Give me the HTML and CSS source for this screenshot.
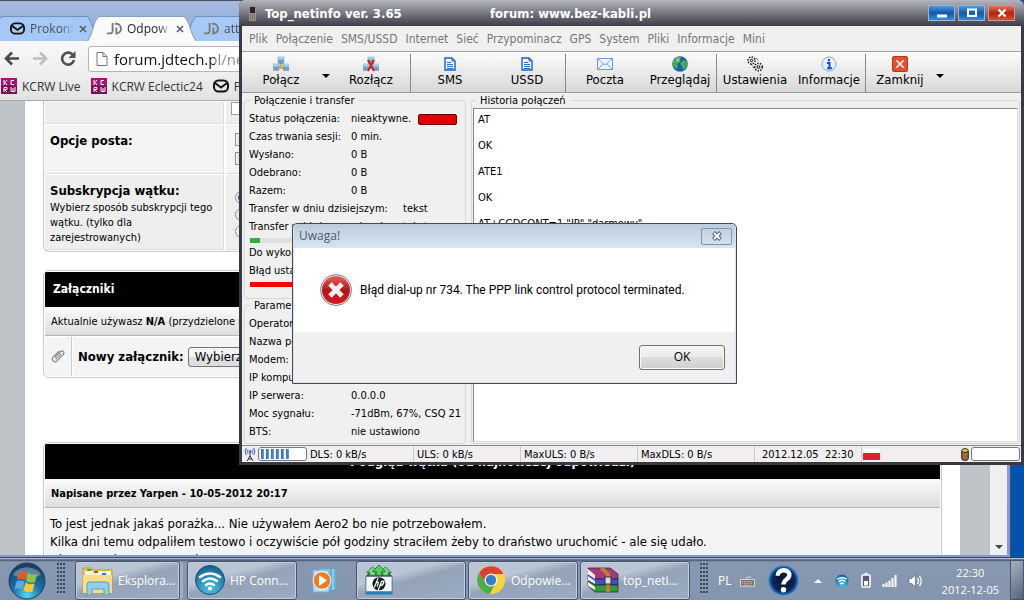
FILE: index.html
```html
<!DOCTYPE html>
<html lang="pl">
<head>
<meta charset="utf-8">
<title>Top_netinfo ver. 3.65</title>
<link rel="stylesheet" href="styles.css">
</head>
<body>
<svg class="defs" aria-hidden="true">
  <defs>
    <linearGradient id="gBlue" x1="0" y1="0" x2="0" y2="1"><stop offset="0" stop-color="#cfe8fa"/><stop offset="1" stop-color="#3f8fd0"/></linearGradient>
    <linearGradient id="gRed" x1="0" y1="0" x2="0" y2="1"><stop offset="0" stop-color="#e0635a"/><stop offset=".5" stop-color="#b3161b"/><stop offset="1" stop-color="#d6191e"/></linearGradient>
    <radialGradient id="gOrb" cx=".5" cy=".9" r=".9"><stop offset="0" stop-color="#4fd8f4"/><stop offset=".45" stop-color="#1d6fa8"/><stop offset="1" stop-color="#16365a"/></radialGradient>
    <radialGradient id="gWifi" cx=".5" cy=".8" r=".8"><stop offset="0" stop-color="#4cc4ea"/><stop offset="1" stop-color="#155f8c"/></radialGradient>
    <radialGradient id="gHelp" cx=".5" cy=".5" r=".5"><stop offset="0" stop-color="#0a1330"/><stop offset=".75" stop-color="#0c2558"/><stop offset="1" stop-color="#2e86d8"/></radialGradient>
    <g id="net">
      <path d="M8 7v4M3 12h10" stroke="#7b6b2a" fill="none"/>
      <rect x="5" y="1" width="6" height="5" fill="url(#gBlue)" stroke="#7fa8cc" stroke-width=".6"/><path d="M5 7h6" stroke="#567"/>
      <rect x="0" y="8" width="6" height="5" fill="url(#gBlue)" stroke="#7fa8cc" stroke-width=".6"/><path d="M0 14h6" stroke="#567"/>
      <rect x="10" y="8" width="6" height="5" fill="url(#gBlue)" stroke="#7fa8cc" stroke-width=".6"/><path d="M10 14h6" stroke="#567"/>
      <path d="M6 10h4M8 8v5" stroke="#e8b51e" stroke-width="1.500"/>
    </g>
    <g id="doc">
      <path d="M3 2h7l3 3v9H3z" fill="#eef5ff" stroke="#1d5fc4" stroke-width="1.400"/><path d="M10 2v3h3" fill="none" stroke="#1d5fc4"/><path d="M5 6.500h4M5 8.500h6M5 10.500h6M5 12.500h6" stroke="#2a6cc8"/>
    </g>
    <g id="mailr"><rect x="1" y="2.500" width="14" height="11" rx="4.500" fill="none" stroke="#111" stroke-width="2"/><path d="M2 5l6 4.500L14 5" fill="none" stroke="#111" stroke-width="2"/></g>
    <g id="jd" fill="none" stroke="#777b80" stroke-width="2"><path d="M6 1v8c0 3-2 3.500-6 3.200"/><path d="M8.500 2c8-1 8.500 10 1.500 10.500V6"/></g>
    <g id="kcrw"><rect width="16" height="16" fill="#a8107c"/><rect y="8" width="16" height="8" fill="#7c0c54"/><path d="M3 2v5M6 2L4 4.500 6 7M13 2.500h-3v4h3M3 14V9.500h3v2H3.500L6 14M10 9v4.500h4V9M12 10v3" fill="none" stroke="#fff"/></g>
    <g id="x"><path d="M1 1l6 6M7 1L1 7" stroke="#555d66" stroke-width="1.600"/></g>
  </defs>
</svg>

<main class="desktop">
  <section class="browser" aria-label="Przeglądarka">
    <div class="tabs">
      <div class="tab">
        <svg class="shape" viewBox="0 0 107 26" preserveAspectRatio="none"><path d="M0 26C5 24 6 2 12 .5H94C100 2 101 24 107 26"/></svg>
        <svg class="fav" viewBox="0 0 16 16"><use href="#mailr"/></svg><span class="name">Prokonf</span><button class="tx" aria-label="Zamknij kartę"><svg viewBox="0 0 8 8"><use href="#x"/></svg></button>
      </div>
      <div class="tab active">
        <svg class="shape" viewBox="0 0 107 26" preserveAspectRatio="none"><path d="M0 26C5 24 6 2 12 .5H94C100 2 101 24 107 26"/></svg>
        <svg class="fav" viewBox="0 0 16 14"><use href="#jd"/></svg><span class="name">Odpow</span><button class="tx" aria-label="Zamknij kartę"><svg viewBox="0 0 8 8"><use href="#x"/></svg></button>
      </div>
      <div class="tab">
        <svg class="shape" viewBox="0 0 107 26" preserveAspectRatio="none"><path d="M0 26C5 24 6 2 12 .5H94C100 2 101 24 107 26"/></svg>
        <svg class="fav" viewBox="0 0 16 14"><use href="#jd"/></svg><span class="name">attach</span>
      </div>
    </div>
    <div class="navbar">
      <button class="nav" aria-label="Wstecz"><svg viewBox="0 0 16 14"><path d="M8 1L2 7l6 6M2 7h13" fill="none" stroke="#4a4a4a" stroke-width="2.600"/></svg></button>
      <button class="nav" aria-label="Dalej"><svg viewBox="0 0 16 14"><path d="M8 1l6 6-6 6M14 7H1" fill="none" stroke="#bdbdbd" stroke-width="2.600"/></svg></button>
      <button class="nav" aria-label="Odśwież"><svg viewBox="0 0 16 15"><path d="M12.500 3.500A6 6 0 1 0 14 9" fill="none" stroke="#505050" stroke-width="2.600"/><path d="M15.500 0v7H8.500z" fill="#505050"/></svg></button>
      <div class="omni"><svg viewBox="0 0 12 15"><path d="M1 1h6l4 4v9H1zM7 1v4h4" fill="#fff" stroke="#777"/></svg><input aria-label="Adres" value="forum.jdtech.pl/newreply.php"></div>
    </div>
    <nav class="bookmarks">
      <a href="#"><svg viewBox="0 0 16 16"><use href="#kcrw"/></svg>KCRW Live</a>
      <a href="#"><svg viewBox="0 0 16 16"><use href="#kcrw"/></svg>KCRW Eclectic24</a>
      <a href="#"><svg viewBox="0 0 16 16"><use href="#mailr"/></svg>Prokonf</a>
    </nav>
    <div class="viewport">
      <div class="page">
        <div class="card options">
          <div class="orow first"><div class="ocell"></div><div class="oval"><textarea aria-label="Treść" rows="1"></textarea></div></div>
          <div class="orow second"><div class="ocell"><b>Opcje posta:</b></div><div class="oval"><input type="checkbox" aria-label="Opcja 1"><input type="checkbox" aria-label="Opcja 2"></div></div>
          <div class="orow third"><div class="ocell"><b>Subskrypcja wątku:</b><small>Wybierz sposób subskrypcji tego wątku. (tylko dla zarejestrowanych)</small></div><div class="oval"><input type="radio" name="s" checked aria-label="Tryb 1"><input type="radio" name="s" aria-label="Tryb 2"><input type="radio" name="s" aria-label="Tryb 3"></div></div>
        </div>
        <div class="card attach">
          <h2>Załączniki</h2>
          <div class="sub light">Aktualnie używasz&nbsp;<b>N/A</b>&nbsp;(przydzielone miejsce)</div>
          <div class="arow"><div class="clip"><svg viewBox="0 0 16 16"><path d="M4 9l6-6c2-2 5 0 3 3l-7 7c-2 2-6-1-4-4l7-7M5 11l6-6" fill="none" stroke="#888" stroke-width="1.300"/></svg></div><div class="anew"><b>Nowy załącznik:</b><button>Wybierz plik</button></div></div>
        </div>
        <div class="card preview">
          <h2>Podgląd wątku (od najnowszej odpowiedzi)</h2>
          <div class="sub"><b>Napisane przez Yarpen - 10-05-2012 20:17</b></div>
          <p>To jest jednak jakaś porażka... Nie używałem Aero2 bo nie potrzebowałem.<br>Kilka dni temu odpaliłem testowo i oczywiście pół godziny straciłem żeby to draństwo uruchomić - ale się udało.<br>Niestety od tego czasu nie</p>
        </div>
      </div>
      <div class="scroll"><svg viewBox="0 0 8 4"><path d="M0 0h8L4 4z" fill="#444"/></svg></div>
    </div>
  </section>

  <section class="app" aria-label="Top_netinfo">
    <header class="title">
      <svg class="phone" viewBox="0 0 10 16"><rect x="1" y="1" width="7" height="15" rx="1" fill="#9a9088"/><rect x="2" y="2" width="5" height="6" fill="#2b2024"/><path d="M2 10h5M2 12h5M2 14h5" stroke="#5a5551" stroke-dasharray="1 1"/></svg>
      <span class="appname">Top_netinfo ver. 3.65</span><span class="forum">forum: www.bez-kabli.pl</span>
      <div class="winbtns">
        <button aria-label="Minimalizuj"><svg viewBox="0 0 12 10"><path d="M1 8h10" stroke="#fff" stroke-width="3"/></svg></button>
        <button aria-label="Maksymalizuj"><svg viewBox="0 0 12 10"><rect x="2" y="1.500" width="8" height="6.500" fill="none" stroke="#fff" stroke-width="2"/></svg></button>
        <button class="close" aria-label="Zamknij"><svg viewBox="0 0 12 10"><path d="M2.500 1.500l7 7M9.500 1.500l-7 7" stroke="#fff" stroke-width="2.200"/></svg></button>
      </div>
    </header>
    <nav class="menu"><a href="#">Plik</a><a href="#">Połączenie</a><a href="#">SMS/USSD</a><a href="#">Internet</a><a href="#">Sieć</a><a href="#">Przypominacz</a><a href="#">GPS</a><a href="#">System</a><a href="#">Pliki</a><a href="#">Informacje</a><a href="#">Mini</a></nav>
    <div class="toolbar">
      <button class="tool wide"><svg viewBox="0 0 16 16"><use href="#net"/></svg>Połącz</button>
      <button class="drop" aria-label="Więcej"><svg viewBox="0 0 8 4"><path d="M0 0h8L4 4z"/></svg></button>
      <button class="tool wide"><svg viewBox="0 0 16 16"><use href="#net"/><path d="M5 4l6 11M11 4L5 15" stroke="#d81c1c" stroke-width="2"/></svg>Rozłącz</button>
      <i></i>
      <button class="tool wide"><svg viewBox="0 0 16 16"><use href="#doc"/></svg>SMS</button>
      <button class="tool"><svg viewBox="0 0 16 16"><use href="#doc"/></svg>USSD</button>
      <i></i>
      <button class="tool wide"><svg viewBox="0 0 16 16"><rect x=".5" y="2.500" width="15" height="11" fill="#eef6ff" stroke="#7398cc"/><path d="M1 3l7 6 7-6M1 13l5-5M15 13l-5-5" fill="none" stroke="#7fa5d8"/></svg>Poczta</button>
      <button class="tool slim"><svg viewBox="0 0 16 16"><circle cx="8" cy="8" r="7.800" fill="#1b62b8"/><path d="M4 2c3-2 5-1 5 0l-2 2 1 2-3 2 1 2-2 3C1 11 0 7 1 5zM10 5l3-1 2 3-1 5-3 2-1-4-2-2z" fill="#46b04a"/><circle cx="6" cy="4" r="2" fill="#fff" opacity=".35"/></svg>Przeglądaj</button>
      <i></i>
      <button class="tool"><svg viewBox="0 0 16 16"><g fill="none" stroke="#111"><circle cx="4.500" cy="4.500" r="3.500" stroke-dasharray="1.400 1.300" stroke-width="1.600"/><circle cx="4.500" cy="4.500" r="1.200"/><circle cx="11.500" cy="11" r="3.800" stroke-dasharray="1.400 1.300" stroke-width="1.600"/><circle cx="11.500" cy="11" r="1.400"/><path d="M9 2l3 3M4 8l3 4" stroke-dasharray="1 1"/></g></svg>Ustawienia</button>
      <button class="tool slim"><svg viewBox="0 0 16 16"><circle cx="8" cy="8" r="7" fill="#e6f1ff" stroke="#8aa9d6"/><path d="M8 3v2.200M6 7h2.500v5M6 12.300h5" stroke="#174fc0" stroke-width="2" fill="none"/></svg>Informacje</button>
      <i></i>
      <button class="tool small"><svg viewBox="0 0 16 16"><rect x=".5" y=".5" width="15" height="15" rx="1.500" fill="#e2502f" stroke="#b23a20"/><path d="M4.500 4.500l7 7M11.500 4.500l-7 7" stroke="#fff" stroke-width="1.600"/></svg>Zamknij</button>
      <button class="drop" aria-label="Więcej opcji"><svg viewBox="0 0 8 4"><path d="M0 0h8L4 4z"/></svg></button>
    </div>
    <div class="content">
      <div class="side">
        <fieldset class="g1"><legend>Połączenie i transfer</legend>
          <div class="row"><span>Status połączenia:</span><span>nieaktywne.</span><em class="led"></em></div>
          <div class="row"><span>Czas trwania sesji:</span><span>0 min.</span></div>
          <div class="row"><span>Wysłano:</span><span>0 B</span></div>
          <div class="row"><span>Odebrano:</span><span>0 B</span></div>
          <div class="row"><span>Razem:</span><span>0 B</span></div>
          <div class="row long"><span>Transfer w dniu dzisiejszym:</span><span>tekst</span></div>
          <div class="row long"><span>Transfer w bieżącym okresie:</span><span>tekst</span></div>
          <div class="meter green"><b></b></div>
          <div class="row"><span>Do wykorzystania:</span></div>
          <div class="row"><span>Błąd ustawień</span></div>
          <div class="meter red"><b></b></div>
        </fieldset>
        <fieldset class="g2"><legend>Parametry połączenia</legend>
          <div class="row"><span>Operator:</span></div>
          <div class="row"><span>Nazwa połącz.:</span></div>
          <div class="row"><span>Modem:</span></div>
          <div class="row"><span>IP komputera:</span></div>
          <div class="row"><span>IP serwera:</span><span>0.0.0.0</span></div>
          <div class="row"><span>Moc sygnału:</span><span>-71dBm, 67%, CSQ 21</span></div>
          <div class="row"><span>BTS:</span><span>nie ustawiono</span></div>
        </fieldset>
      </div>
      <fieldset class="history"><legend><label for="log">Historia połączeń</label></legend>
        <textarea id="log" readonly>AT

OK

ATE1

OK

AT+CGDCONT=1,"IP","darmowy"</textarea>
      </fieldset>
    </div>
    <footer class="status">
      <svg class="ant" viewBox="0 0 12 14"><path d="M6 5v5M6 9l-3 5M6 9l3 5M4 12h4" stroke="#333" fill="none"/><path d="M4 2.500q-1.500 2 0 4M8 2.500q1.500 2 0 4M2.300 1q-2.500 3.500 0 7M9.700 1q2.500 3.500 0 7" stroke="#2f62c8" fill="none"/><circle cx="6" cy="4.500" r="1.300" fill="#2f62c8"/></svg>
      <div class="signal"><b></b><b></b><b></b><b></b><b></b><b></b></div>
      <span class="c1">DLS: 0 kB/s</span><span class="c2">ULS: 0 kB/s</span><span class="c3">MaxULS: 0 B/s</span><span class="c3">MaxDLS: 0 B/s</span><span class="c4">2012.12.05&nbsp; 22:30</span>
      <em class="flag"></em>
      <svg class="cyl" viewBox="0 0 8 13"><rect x=".7" y="2" width="6.600" height="10.300" rx="2" fill="#a5683a" stroke="#222"/><ellipse cx="4" cy="2.500" rx="3.300" ry="1.800" fill="#f0dc28" stroke="#222"/></svg>
      <div class="signal empty"></div>
    </footer>
  </section>

  <section class="dialog" role="dialog" aria-label="Uwaga!">
    <header>Uwaga!<button aria-label="Zamknij okno"><svg viewBox="0 0 12 10"><path d="M2.500 1.500l7 7M9.500 1.500l-7 7" stroke="#56606e" stroke-width="4"/><path d="M3 2l6 6M9 2L3 8" stroke="#fff" stroke-width="1.800"/></svg></button></header>
    <div class="msg"><svg viewBox="0 0 32 32"><circle cx="16" cy="16" r="15.500" fill="#eee" stroke="#8b7d7d"/><circle cx="16" cy="16" r="14" fill="url(#gRed)"/><path d="M10 10l12 12M22 10L10 22" stroke="#eee" stroke-width="5"/></svg>Błąd dial-up nr 734. The PPP link control protocol terminated.</div>
    <div class="actions"><button>OK</button></div>
  </section>
</main>

<footer class="taskbar">
  <button class="start" aria-label="Start"><svg viewBox="0 0 38 38"><circle cx="19" cy="19" r="18" fill="url(#gOrb)" stroke="#24415f"/><path d="M5 13C9 3 29 3 33 13c-8 4-20 4-28 0z" fill="#fff" opacity=".3"/><path d="M11 11q4-3 8-1l-2 8q-4-2-8 0z" fill="#e8562a"/><path d="M20 11q4 3 9 1l-2 8q-5 2-9-1z" fill="#8cc63e"/><path d="M8.500 19.500q4-2 8 0l-2 8q-4-2-8 0z" fill="#5aa9e6"/><path d="M17.500 20.500q4 3 9 1l-2 8q-5 2-9-1z" fill="#fdc92e"/></svg></button>
  <div class="grip"></div>
  <div class="tasks">
  <button class="task stacked"><svg viewBox="0 0 32 30"><path d="M1 3h8l1 2h20v23H1z" fill="#e9c964" stroke="#b99b3f"/><path d="M3 6h26v19H3z" fill="#fff6d2"/><path d="M5 4h4v2H5z" fill="#3fae49"/><path d="M12 6h4v2h-4z" fill="#d6452c"/><path d="M20 8h4v2h-4z" fill="#2d77cf"/><path d="M1 10h29v18H1z" fill="#f5dd8c"/><path d="M5 30V20q0-3 3-3h16q3 0 3 3v10h-5v-6H10v6z" fill="#8fd0ec" stroke="#5a9fc4"/></svg>Eksplora...</button>
  <button class="task hp"><svg viewBox="0 0 30 30"><circle cx="15" cy="15" r="14.500" fill="url(#gWifi)" stroke="#1c4f70"/><g fill="none" stroke="#fff" stroke-width="2.600" stroke-linecap="round"><path d="M5 12q10-7 20 0M8 16q7-5 14 0M11 20q4-3 8 0"/></g><circle cx="15" cy="23.500" r="2" fill="#fff"/></svg>HP Conn...</button>
  <button class="wmp" aria-label="Odtwarzacz"><svg viewBox="0 0 26 25"><path d="M8 1h16v21H8z" fill="#8ecdf0"/><path d="M19 0v24M23 1v22" stroke="#3f93c9"/><path d="M1 2h16v22H1z" fill="#b7def5" stroke="#6aaed8"/><circle cx="10" cy="12.500" r="8.800" fill="#ee7b1c" stroke="#fff"/><path d="M7 7v11l8-5.500z" fill="#fff"/></svg></button>
  <button class="task plain" aria-label="HP"><svg viewBox="0 0 30 32"><path d="M1 12h28v19H1z" fill="#f4f6f8" stroke="#53718a"/><path d="M1 12l4-5h20l4 5z" fill="#41525c"/><path d="M2 8l6-6 6 6h-3v3H5V8zM16 8l6-6 6 6h-3v3h-6V8z" fill="#7ddb83" stroke="#247c37"/><path d="M8 7l7-7 7 7h-4v4h-6V7z" fill="#5cc765" stroke="#247c37"/><path d="M1 28h28v3H1z" fill="#1c82c4"/><circle cx="15" cy="20" r="7" fill="#161c22"/><path d="M14 14l-4 10M12 19q3-2 2 1l-1 3M18 17l-4 10M17 18q4-2 3 1t-4 3" fill="none" stroke="#fff" stroke-width="1.300"/></svg></button>
  <button class="task"><svg viewBox="0 0 30 30"><circle cx="15" cy="15" r="14" fill="#f8d33b"/><path d="M3 8A14 14 0 0 1 27.500 9H15a6.500 6.500 0 0 0-6 8z" fill="#dd4132"/><path d="M3 8A14 14 0 0 0 13.500 29l6-10.500A6.500 6.500 0 0 1 9 17z" fill="#4dad4b"/><circle cx="15" cy="15" r="6.500" fill="#eef4f8"/><circle cx="15" cy="15" r="5.200" fill="#397ccc"/></svg>Odpowie...</button>
  <button class="task"><svg viewBox="0 0 32 28"><g stroke="#222" stroke-width=".7"><path d="M1 2h22l8 6v5H8z" fill="#a63a7c"/><path d="M1 9l7 4h23v6H8l-7-5z" fill="#3d53c9"/><path d="M1 15l7 4h23v7H8l-7-6z" fill="#36963b"/></g><path d="M1 3l7 6v4L1 8M1 10l7 5v3l-7-4M1 16l7 5v3l-7-4" fill="#eee"/><path d="M14 2l7 6v18" fill="none" stroke="#b8813a" stroke-width="4"/><rect x="18" y="11" width="6" height="7" fill="#ddd" stroke="#333"/></svg>top_neti...</button>
  </div>
  <div class="grip"></div>
  <div class="tray">
    <span class="lang">PL</span>
    <svg class="kbd" viewBox="0 0 16 12"><path d="M7 4V2h4V0" fill="none" stroke="#d8d4cc"/><rect x=".5" y="4.500" width="15" height="7" fill="#77736c" stroke="#ded9cf"/><path d="M2 6.500h12M2 8.500h12M4 10.300h8" stroke="#ded9cf" stroke-dasharray="1 1"/></svg>
    <svg class="help" viewBox="0 0 32 32"><circle cx="16" cy="16" r="15.500" fill="url(#gHelp)"/><path d="M10 11c0-8 13-7 12 0-.5 4-6 4-6 9" fill="none" stroke="#fff" stroke-width="4.500"/><circle cx="16" cy="25.500" r="2.800" fill="#fff"/></svg>
    <svg class="up" viewBox="0 0 8 4"><path d="M0 4h8L4 0z" fill="#fff"/></svg>
    <svg class="s14" viewBox="0 0 30 30"><circle cx="15" cy="15" r="14" fill="url(#gWifi)"/><path d="M5 11q10-6 20 0M8 16q7-5 14 0M11 21q4-3 8 0" fill="none" stroke="#fff" stroke-width="3"/></svg>
    <svg class="bat" viewBox="0 0 10 15"><path d="M3.500 0h3v2h-3z" fill="#fff"/><rect x="1" y="2" width="8" height="12" rx="1" fill="#555e68" stroke="#fff" stroke-width="1.600"/><path d="M3 8h4v4.500H3z" fill="#fff"/></svg>
    <svg class="bars" viewBox="0 0 16 12"><path d="M1.500 12V9M4.500 12V7.500M7.500 12V5.500M10.500 12V3M13.500 12V0" stroke="#fff" stroke-width="2"/></svg>
    <svg class="vol" viewBox="0 0 14 14"><path d="M1 4.500h2.500L7.500 1v12l-4-3.500H1z" fill="#fff" stroke="#4d5968" stroke-width=".6"/><path d="M9.500 4q2 3 0 6M11.500 2q3.500 5 0 10" fill="none" stroke="#fff" stroke-width="1.300"/></svg>
    <time>22:30<br>2012-12-05</time>
  </div>
  <button class="peek" aria-label="Pokaż pulpit"></button>
</footer>
</body>
</html>
```
FILE: styles.css
```css
* { box-sizing: border-box; }
body { margin: 0; height: 100vh; display: flex; flex-direction: column; overflow: hidden; background: #0252ae; color: #000; font: 11px/18px "DejaVu Sans Condensed", "Noto Sans", sans-serif; }
button { font: inherit; color: inherit; padding: 0; border: 0; background: none; }
a { color: inherit; text-decoration: none; }
svg { display: block; flex: none; }
.defs { position: absolute; width: 0; height: 0; }
.desktop { position: relative; flex: 1; min-height: 0; }

/* browser window */
.browser { position: absolute; top: 0; left: 0; right: 13px; bottom: 0; display: flex; flex-direction: column; background: linear-gradient(#a0b8e0, #8099cf); border-top: 1px solid #4a4e60; border-right: 1px solid #3c4c78; border-bottom: 1px solid #3c4668; padding: 0 3px 2px 0; }
.tabs { display: flex; height: 40px; padding-top: 15px; margin-left: -10px; background: linear-gradient(#a5bbe0, #8fa9d8); font-size: 13px; line-height: 25px; }
.tab { position: relative; z-index: 0; flex: none; width: 110px; margin-right: -13px; padding: 0 13px 0 20px; display: flex; align-items: center; gap: 5px; color: #45505c; }
.tab.active { z-index: 1; color: #222; }
.shape { position: absolute; inset: 0; width: 100%; height: 100%; z-index: -1; fill: #a6c8f4; stroke: #7290bd; }
.active .shape { fill: #fafafa; stroke: #8aa0c4; }
.fav { width: 15px; height: 15px; }
.name { width: 42px; flex: 1; overflow: hidden; font-family: "Open Sans", sans-serif; font-size: 12px; white-space: nowrap; -webkit-mask-image: linear-gradient(90deg, #000 70%, transparent); mask-image: linear-gradient(90deg, #000 70%, transparent); }
.tx svg { width: 8px; height: 8px; }
.navbar { display: flex; align-items: center; gap: 12px; height: 35px; padding-left: 4px; background: linear-gradient(#fafafa, #ededee); }
.nav svg { width: 16px; height: 15px; }
.omni { flex: 1; height: 26px; display: flex; align-items: center; gap: 6px; padding-left: 7px; background: #fff; border: 1px solid #b4b4b8; border-radius: 3px; }
.omni svg { width: 12px; height: 16px; }
.omni input { flex: 1; border: 0; padding: 0; outline: 0; font: 15px "Open Sans", sans-serif; color: transparent; background: linear-gradient(90deg, #111 101px, #8a8a8a 101px); -webkit-background-clip: text; background-clip: text; }
.bookmarks { display: flex; gap: 10px; height: 25px; align-items: center; padding: 0 0 4px 1px; background: linear-gradient(#ededee, #e2e2e3); border-bottom: 1px solid #a9a9ab; font: 12px "Open Sans", sans-serif; color: #333; }
.bookmarks a { display: flex; align-items: center; gap: 5px; }
.bookmarks svg { width: 16px; height: 16px; }
.viewport { flex: 1; min-height: 0; display: flex; overflow: hidden; background: #bdc3c6; padding-left: 25px; }
.page { flex: 1; min-width: 0; overflow: hidden; background: #fff; margin-right: 30px; padding: 0 18px; }
.scroll { width: 17px; background: #efefef; display: flex; align-items: flex-end; justify-content: center; padding-bottom: 6px; }
.scroll svg { width: 8px; height: 4px; }
.card { border: 1px solid #c6c8c9; border-radius: 6px; padding: 1px; background: #fff; overflow: hidden; }
.card h2 { margin: 0; height: 35px; padding-left: 8px; background: #000; color: #fff; font: bold 12px/35px "DejaVu Sans Condensed", sans-serif; }
.sub { height: 29px; padding: 2px 0 0 6px; display: flex; align-items: center; background: linear-gradient(#fafafa, #dedede); border-bottom: 1px solid #b4b4b4; font-size: 11px; white-space: nowrap; }
.options { border-top: 0; border-radius: 0 0 6px 6px; margin-bottom: 18px; }
.orow { display: flex; gap: 2px; margin-bottom: 1px; }
.ocell { width: 179px; padding: 6px 5px 5px; background: #f4f4f4; border: 1px solid #ddd; border-width: 0 1px 1px 0; }
.ocell b { font-size: 13px; display: block; line-height: 19px; }
.ocell small { font-size: 11px; line-height: 15px; display: block; }
.oval { flex: 1; background: #f4f4f4; padding: 8px 9px; border-bottom: 1px solid #ddd; display: flex; flex-direction: column; gap: 6px; }
.oval input { appearance: none; margin: 0; width: 13px; height: 13px; border: 1px solid #8e8f8f; background: #e4e6e8; box-shadow: inset 0 0 0 1px #f4f4f4; }
.oval input[type="radio"] { border-radius: 50%; }
.oval input:checked { background: radial-gradient(circle, #1d5c80 3px, #e4e6e8 4px); }
.oval textarea { margin: -8px 0 0 -4px; height: 17px; resize: none; border: 1px solid #999; }
.first { height: 22px; } .second { height: 49px; } .third { height: 75px; margin: 0; }
.first > *, .third > * { background: #eee; }
.third .oval { padding-top: 16px; gap: 4px; }
.attach { margin-bottom: 64px; }
.arow { display: flex; gap: 1px; height: 40px; padding-top: 1px; }
.clip { width: 27px; background: #f4f4f4; border-right: 1px solid #ccc; display: flex; align-items: center; justify-content: center; }
.clip svg { width: 15px; height: 15px; }
.anew { flex: 1; display: flex; align-items: center; gap: 4px; padding-left: 5px; background: #f4f4f4; font-size: 13px; }
.anew button { height: 20px; padding: 0 6px; border: 1px solid #777; border-radius: 3px; background: linear-gradient(#f4f4f4 50%, #ddd 50%); font-size: 13px; line-height: 18px; }
.preview { border-bottom: 0; }
.preview h2 { text-align: center; padding-left: 0; font-size: 13px; }
.preview p { margin: 0; padding: 7px 5px; background: #f4f4f4; font-size: 13px; line-height: 18px; }

/* Top_netinfo window */
.app { position: absolute; left: 239px; top: 0; right: 0; height: 465px; display: flex; flex-direction: column; border: solid #383943; border-width: 0 3px 3px; border-radius: 6px 6px 0 0; background: #f0f0f0; }
.title { height: 26px; margin: 0 -3px; padding: 0 9px; display: flex; align-items: center; background: linear-gradient(#b4b5bd, #83848e 40%, #3c3d46); border-radius: 6px 6px 0 0; color: #fff; font: bold 13px "DejaVu Sans Condensed", sans-serif; }
.phone { width: 10px; height: 16px; margin-right: 7px; }
.appname { width: 225px; }
.winbtns { margin-left: auto; display: flex; gap: 3px; }
.winbtns button { width: 27px; height: 16px; display: grid; place-items: center; border: 1px solid #9bb5d4; background: linear-gradient(#4c9ae0, #1556a8 50%, #2f8fe4); }
.winbtns svg { width: 12px; height: 10px; }
.winbtns .close { border-color: #c99; background: linear-gradient(#e07a5c, #b52412 50%, #e04a28); }
.menu { height: 26px; display: flex; gap: 8px; align-items: center; padding-left: 7px; border-bottom: 1px solid #a0a0a0; color: #777; font-size: 12px; }
.toolbar { height: 41px; display: flex; background: linear-gradient(#fcfcfc, #d8d8d8); border-bottom: 1px solid #999; font-size: 13px; line-height: 16px; }
.toolbar i { width: 1px; margin-top: 2px; background: #888; }
.tool { width: 76px; padding-top: 4px; display: flex; flex-direction: column; align-items: center; white-space: nowrap; }
.tool svg { width: 16px; height: 16px; }
.wide { width: 78px; } .slim { width: 72px; } .small { width: 68px; }
.drop { width: 12px; padding: 8px 2px 0; }
.drop svg { width: 8px; height: 4px; }
.content { flex: 1; min-height: 0; display: flex; gap: 5px; padding: 1px 1px 1px 2px; }
.side { width: 222px; flex: none; }
fieldset { margin: 0; min-width: 0; padding: 0 4px; border: 1px solid #d4d8dc; border-radius: 3px; }
legend { padding: 0 4px; margin-left: 1px; line-height: 13px; }
label { display: block; }
.g1 { height: 205px; padding-top: 3px; }
.g2 { height: 145px; padding-top: 3px; }
.row { display: flex; align-items: center; height: 18px; white-space: nowrap; }
.row span:first-child { width: 102px; flex: none; }
.row.long span:first-child { width: 154px; }
.led { width: 39px; height: 11px; margin-left: auto; margin-right: 4px; background: #e00000; border: 1px solid #600; border-radius: 2px; }
.meter { height: 5px; margin: 2px 1px 1px; background: #e0e0e0; }
.meter b { display: block; height: 100%; width: 10px; background: #36b03c; }
.red b { width: 100%; background: #f00; }
.history { flex: 1; padding: 1px; display: flex; }
.history legend { margin-left: 3px; }
.history textarea { flex: 1; height: 100%; resize: none; margin: 0; padding: 4px; border: 1px solid #999; border-color: #888 #ddd #ddd #888; background: #fff; outline: 0; font: 11px/13px "DejaVu Sans Condensed", sans-serif; overflow: hidden; }
.status { height: 17px; display: flex; align-items: center; border-top: 1px solid #888; background: #f0eeee; line-height: 18px; white-space: nowrap; padding: 0 1px; }
.ant { width: 12px; height: 14px; margin: 0 2px 0 1px; }
.signal { width: 49px; height: 14px; padding: 1px 2px; display: flex; gap: 2px; border: 1px solid #777; border-radius: 3px; background: #fff; }
.signal b { width: 3px; background: linear-gradient(90deg, #2b66bb, #66a0e8); }
.status span { height: 16px; padding-left: 3px; border-right: 1px solid #ccc; }
.status .c1 { width: 107px; } .status .c2 { width: 107px; } .status .c3 { width: 117px; } .status .c4 { width: 107px; padding-left: 7px; }
.flag { width: 17px; height: 11px; margin-left: 1px; background: linear-gradient(#fff 40%, #e3202a 40%); }
.cyl { width: 8px; height: 13px; margin: 0 2px 0 auto; }

/* message box */
.dialog { position: absolute; left: 292px; top: 223px; width: 445px; border: 1px solid #444a54; border-radius: 5px 5px 0 0; background: #d9e4f1; padding: 0 1px 1px; font: 12px/16px "Open Sans", sans-serif; }
.dialog header { height: 24px; padding: 0 3px 0 5px; display: flex; align-items: center; justify-content: space-between; background: linear-gradient(#bccbdc, #d9e5f2); color: #505a66; border-radius: 4px 4px 0 0; }
.dialog header button { width: 31px; height: 17px; display: grid; place-items: center; border: 1px solid #8396ac; border-radius: 2px; }
.dialog header svg { width: 12px; height: 10px; }
.msg { height: 84px; display: flex; align-items: center; gap: 8px; padding-left: 26px; background: #fff; white-space: nowrap; font-family: Roboto, sans-serif; }
.msg svg { width: 32px; height: 32px; }
.actions { height: 50px; display: flex; justify-content: flex-end; align-items: center; padding-right: 10px; background: #f0f0f0; }
.actions button { width: 86px; height: 25px; border: 1px solid #707070; border-radius: 3px; background: linear-gradient(#f4f4f4, #ebebeb 50%, #dcdcdc 50%, #d0d0d0); box-shadow: inset 0 0 0 1px #fafafa; }

/* taskbar */
.taskbar { height: 42px; flex: none; display: flex; align-items: center; background: linear-gradient(#cfd8e6 0, #48556c 2px, #8797b0 4px, #8496af); color: #fff; font: 12px/17px "Open Sans", sans-serif; }
.start { margin: 3px 11px 0 8px; }
.start svg { width: 38px; height: 38px; }
.grip { flex: none; width: 9px; height: 32px; background: radial-gradient(circle at 1px 1px, #39465c 1px, transparent 1px) 0 0 / 3px 4px; }
.tasks { display: flex; align-items: center; gap: 2px; margin: 2px 10px 0 9px; flex: 1; }
.task { width: 110px; height: 39px; display: flex; align-items: center; gap: 4px; padding-left: 6px; border: 1px solid #465571; border-radius: 3px; background: linear-gradient(165deg, #b9c4d4 35%, #94a3b8 50%, #9babc2); box-shadow: inset 0 0 0 1px #c4cedb; white-space: nowrap; }
.task svg { width: 32px; height: 30px; }
.stacked { width: 105px; margin-right: 5px; box-shadow: inset 0 0 0 1px #c4cedb, 4px 0 0 -1px #9eadc2; }
.wmp { width: 55px; padding-left: 13px; }
.wmp svg { width: 26px; height: 25px; }
.tray { display: flex; flex: none; align-items: center; padding-left: 9px; padding-top: 3px; }
.lang { margin-right: 8px; }
.kbd { width: 15px; height: 12px; margin-right: 13px; }
.help { width: 31px; height: 31px; margin-right: 15px; }
.up { width: 8px; height: 4px; margin-right: 13px; }
.s14 { width: 14px; height: 14px; margin-right: 12px; }
.bat { width: 10px; height: 15px; margin-right: 11px; }
.bars { width: 16px; height: 12px; margin-right: 10px; }
.vol { width: 14px; height: 14px; margin-right: 20px; }
.tray time { text-align: center; font-size: 11px; white-space: nowrap; }
.peek { flex: none; width: 14px; height: 40px; margin: 2px 0 0 11px; border: 1px solid #495770; background: linear-gradient(135deg, #a5b1c2, #56647b); }
```
